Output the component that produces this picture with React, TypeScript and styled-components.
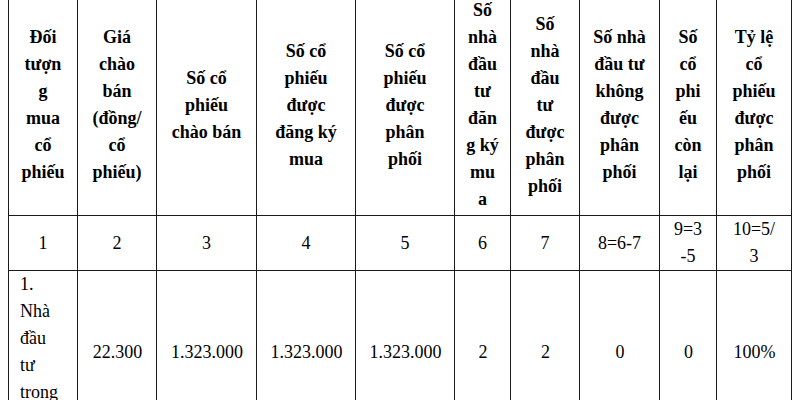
import React from 'react'
import styled, { createGlobalStyle } from 'styled-components'

const GlobalStyle = createGlobalStyle`
  html, body {
    margin: 0;
    padding: 0;
    background: #ffffff;
  }
  body {
    font-family: 'Liberation Serif', serif;
    color: #000000;
    overflow: hidden;
  }
`

const Page = styled.div`
  padding-left: 8px;
  height: 400px;
  overflow: hidden;
`

const Table = styled.table`
  margin-top: -7px;
  border-collapse: collapse;
  table-layout: fixed;
  width: 783px;
  font-family: 'Liberation Serif', 'Times New Roman', serif;
  font-size: 18px;
  line-height: 27px;
  color: #000000;
`

const Cell = styled.td<{ $align?: 'left' | 'center' }>`
  border: 1px solid #1a1a1a;
  padding: 0 10px;
  font-family: 'Liberation Serif', 'Times New Roman', serif;
  text-align: ${p => p.$align ?? 'center'};
  vertical-align: middle;
  white-space: nowrap;
`

const HeadCell = styled(Cell).attrs({ as: 'th' })`
  font-weight: bold;
  padding: 3px 10px 2px;
`

const BodyCell = styled(Cell)`
  padding: 0 10px 0 11px;
`

const COLUMN_WIDTHS = [69, 79, 100, 99, 99, 56, 69, 80, 57, 75]

const HEADERS: string[][] = [
  ['Đối', 'tượn', 'g', 'mua', 'cổ', 'phiếu'],
  ['Giá', 'chào', 'bán', '(đồng/', 'cổ', 'phiếu)'],
  ['Số cổ', 'phiếu', 'chào bán'],
  ['Số cổ', 'phiếu', 'được', 'đăng ký', 'mua'],
  ['Số cổ', 'phiếu', 'được', 'phân', 'phối'],
  ['Số', 'nhà', 'đầu', 'tư', 'đăn', 'g ký', 'mu', 'a'],
  ['Số', 'nhà', 'đầu', 'tư', 'được', 'phân', 'phối'],
  ['Số nhà', 'đầu tư', 'không', 'được', 'phân', 'phối'],
  ['Số', 'cổ', 'phi', 'ếu', 'còn', 'lại'],
  ['Tỷ lệ', 'cổ', 'phiếu', 'được', 'phân', 'phối'],
]

const INDEXES: string[][] = [
  ['1'],
  ['2'],
  ['3'],
  ['4'],
  ['5'],
  ['6'],
  ['7'],
  ['8=6-7'],
  ['9=3', '-5'],
  ['10=5/', '3'],
]

const ROWS: string[][][] = [
  [
    ['1.', 'Nhà', 'đầu', 'tư', 'trong', 'nước'],
    ['22.300'],
    ['1.323.000'],
    ['1.323.000'],
    ['1.323.000'],
    ['2'],
    ['2'],
    ['0'],
    ['0'],
    ['100%'],
  ],
]

function Lines({ lines }: { lines: string[] }) {
  return (
    <>
      {lines.map((line, i) => (
        <React.Fragment key={i}>
          {i > 0 && <br />}
          {line}
        </React.Fragment>
      ))}
    </>
  )
}

export default function App() {
  return (
    <Page>
      <GlobalStyle />
      <Table>
        <colgroup>
          {COLUMN_WIDTHS.map((w, i) => (
            <col key={i} style={{ width: w }} />
          ))}
        </colgroup>
        <thead>
          <tr>
            {HEADERS.map((lines, i) => (
              <HeadCell key={i}>
                <Lines lines={lines} />
              </HeadCell>
            ))}
          </tr>
        </thead>
        <tbody>
          <tr>
            {INDEXES.map((lines, i) => (
              <Cell key={i}>
                <Lines lines={lines} />
              </Cell>
            ))}
          </tr>
          {ROWS.map((row, r) => (
            <tr key={r}>
              {row.map((lines, i) => (
                <BodyCell key={i} $align={i === 0 ? 'left' : 'center'}>
                  <Lines lines={lines} />
                </BodyCell>
              ))}
            </tr>
          ))}
        </tbody>
      </Table>
    </Page>
  )
}
